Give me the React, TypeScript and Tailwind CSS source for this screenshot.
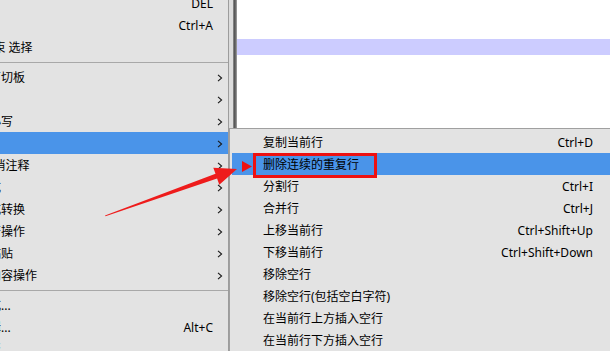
import React from "react";

type LeftItem =
  | { kind: "sep" }
  | { kind: "item"; label: string; shortcut?: string; sub?: boolean; active?: boolean };

const leftItems: LeftItem[] = [
  { kind: "item", label: "删除", shortcut: "DEL" },
  { kind: "item", label: "全选", shortcut: "Ctrl+A" },
  { kind: "item", label: "开始/结束 选择" },
  { kind: "sep" },
  { kind: "item", label: "复制到剪切板", sub: true },
  { kind: "item", label: "缩进", sub: true },
  { kind: "item", label: "转换大小写", sub: true },
  { kind: "item", label: "行操作", sub: true, active: true },
  { kind: "item", label: "注释/取消注释", sub: true },
  { kind: "item", label: "自动完成", sub: true },
  { kind: "item", label: "文档格式转换", sub: true },
  { kind: "item", label: "空白字符操作", sub: true },
  { kind: "item", label: "选择性粘贴", sub: true },
  { kind: "item", label: "选定的内容操作", sub: true },
  { kind: "sep" },
  { kind: "item", label: "列块模式..." },
  { kind: "item", label: "列块编辑...", shortcut: "Alt+C" },
  { kind: "item", label: "字符面板" },
];

const subItems: { label: string; shortcut?: string; active?: boolean }[] = [
  { label: "复制当前行", shortcut: "Ctrl+D" },
  { label: "删除连续的重复行", active: true },
  { label: "分割行", shortcut: "Ctrl+I" },
  { label: "合并行", shortcut: "Ctrl+J" },
  { label: "上移当前行", shortcut: "Ctrl+Shift+Up" },
  { label: "下移当前行", shortcut: "Ctrl+Shift+Down" },
  { label: "移除空行" },
  { label: "移除空行(包括空白字符)" },
  { label: "在当前行上方插入空行" },
  { label: "在当前行下方插入空行" },
];

function Chevron() {
  return (
    <svg width="6" height="8" viewBox="0 0 6 8" className="block">
      <polyline points="1,0.8 4.6,4 1,7.2" fill="none" stroke="#1a1a1a" strokeWidth="1.1" />
    </svg>
  );
}

export default function App() {
  return (
    <div
      className="relative w-[610px] h-[351px] overflow-hidden bg-[#e3e3e3] flex text-[12px] leading-none text-black"
      style={{ fontFamily: '"Noto Sans", "Noto Sans CJK SC", sans-serif' }}
    >
      {/* Left (parent) menu */}
      <div className="w-[229px] h-full overflow-hidden border-r border-[#9c9c9c] bg-[#e3e3e3] shrink-0">
        <div className="mt-[-8px] flex flex-col">
          {leftItems.map((it, i) =>
            it.kind === "sep" ? (
              <div key={i} className="h-[8px] flex items-center">
                <div className="h-px w-full bg-[#a8a8a8]" />
              </div>
            ) : (
              <div
                key={i}
                className={`h-[22px] flex items-center pt-[2px] ${it.active ? "bg-[#4a94e9]" : ""}`}
              >
                <span className="ml-[-47px] whitespace-nowrap">{it.label}</span>
                <span className="flex-1" />
                {it.shortcut ? <span className="whitespace-nowrap">{it.shortcut}</span> : null}
                <span className="w-[15px] flex items-center pl-[4px]">
                  {it.sub ? <Chevron /> : null}
                </span>
              </div>
            )
          )}
        </div>
      </div>

      {/* Right column: editor area + submenu */}
      <div className="flex-1 flex flex-col">
        <div className="h-[129px] flex border-b border-[#a0a0a0] shrink-0">
          <div className="w-[4px] bg-[#dcdcdc]" />
          <div className="w-[4px] bg-[linear-gradient(to_right,#9a9a9a,#555555,#6e6e6e,#a8a8a8)]" />
          <div className="flex-1 bg-white pt-[39px]">
            <div className="h-[16px] bg-[#ccccff]" />
          </div>
        </div>
        <div className="flex-1 border-l border-[#a0a0a0] bg-[#e3e3e3] pt-[2px]">
          {subItems.map((it, i) => (
            <div
              key={i}
              className={`ml-[2px] h-[22px] flex items-center pt-[2px] pl-[31px] pr-[17px] ${
                it.active ? "bg-[#4a94e9]" : ""
              }`}
            >
              <span className="whitespace-nowrap">{it.label}</span>
              <span className="flex-1" />
              {it.shortcut ? <span className="whitespace-nowrap">{it.shortcut}</span> : null}
            </div>
          ))}
        </div>
      </div>

      {/* Annotation: red box around the item */}
      <div className="absolute left-[253px] top-[153px] w-[124px] h-[25px] border-[3px] border-[#ee1111]" />

      {/* Annotation: red arrow and pointer triangle */}
      <svg className="absolute left-0 top-0 pointer-events-none" width="610" height="351" viewBox="0 0 610 351">
        <polygon
          points="105,215.5 215.5,173.8 213.3,167.7 237,169 219.3,184.7 217.1,178.6 105.5,216.3"
          fill="#ee1c1c"
        />
        <polygon points="242,161 252,166.5 242,172" fill="#ee1111" />
      </svg>
    </div>
  );
}
